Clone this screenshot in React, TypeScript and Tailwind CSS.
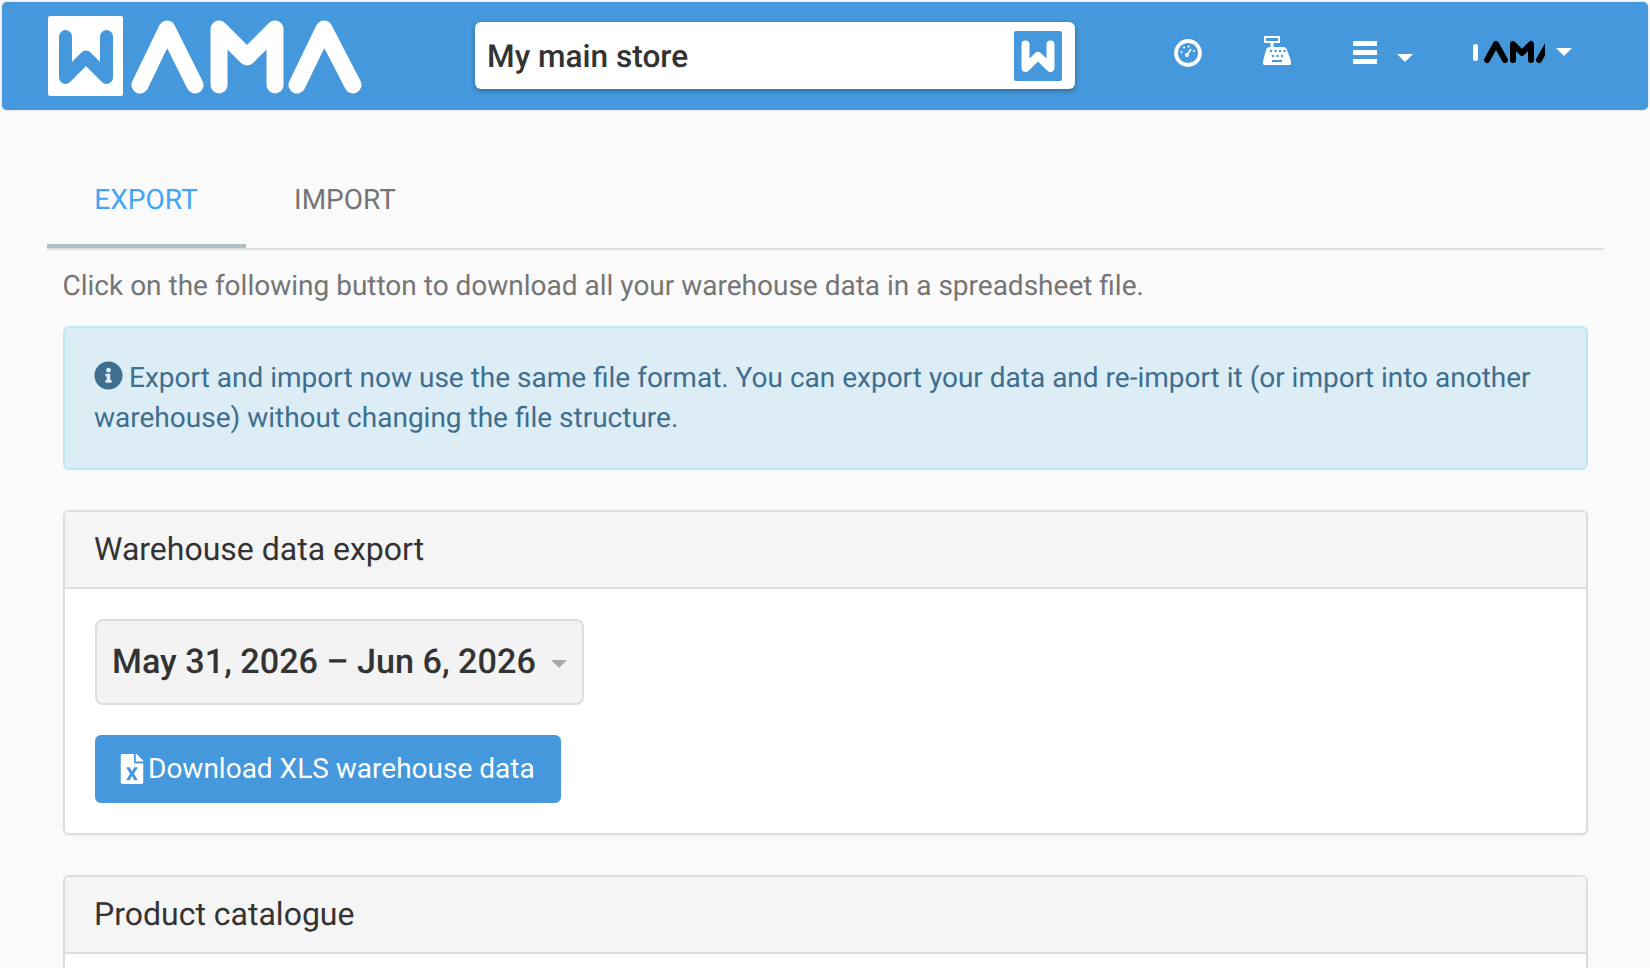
import { FaFileExcel, FaInfoCircle } from "react-icons/fa";

function Logo() {
  return (
    <svg width="316" height="80" viewBox="47 16 316 80" className="block shrink-0">
      <rect x="48" y="16" width="75" height="80" rx="2" fill="#fff" />
      <path d="M65.5 36.5V77.5L86 57L106.5 77.5V36.5" fill="none" stroke="#4498db" strokeWidth="13" strokeLinecap="round" strokeLinejoin="round" />
      <g fill="none" stroke="#fff" strokeWidth="17" strokeLinecap="round" strokeLinejoin="round">
        <path d="M140 85L167 29L195 85" />
        <path d="M219 85V29L247 57L275 29V85" />
        <path d="M297 85L324 29L353 85" />
      </g>
    </svg>
  );
}

function StoreIcon() {
  return (
    <svg width="48" height="50" viewBox="0 0 48 50" className="block shrink-0">
      <rect width="48" height="50" rx="2" fill="#4498db" />
      <path d="M11.5 13.5V37L24 25L36.5 37V13.5" fill="none" stroke="#fff" strokeWidth="8" strokeLinecap="round" strokeLinejoin="round" />
    </svg>
  );
}

function GaugeIcon() {
  return (
    <svg width="28" height="28" viewBox="0 0 28 28" className="block">
      <circle cx="14" cy="14" r="12" fill="none" stroke="#fff" strokeWidth="3.8" />
      <circle cx="13" cy="16" r="2" fill="#fff" />
      <path d="M13 16L17 10" stroke="#fff" strokeWidth="1.6" />
      <circle cx="7.5" cy="13" r="1.1" fill="#fff" />
      <circle cx="10" cy="8.5" r="1.1" fill="#fff" />
      <circle cx="14.5" cy="7.5" r="1.1" fill="#fff" />
      <circle cx="20" cy="12" r="1.1" fill="#fff" />
    </svg>
  );
}

function RegisterIcon() {
  return (
    <svg width="28" height="29" viewBox="0 0 28 29" className="block">
      <path fillRule="evenodd" fill="#fff" d="M1 0H17V7H10.5V11H20Q23 11 24 14L28 25V27.5Q28 29 26.5 29H1.5Q0 29 0 27.5V25L3 14Q4 11 7 11H7.5V7H1ZM3 2V5H15V2Z" />
      <g fill="#4498db">
        <circle cx="8" cy="15" r="1.2" />
        <circle cx="12.5" cy="15" r="1.2" />
        <circle cx="17" cy="15" r="1.2" />
        <circle cx="21.5" cy="15" r="1.2" />
        <circle cx="10" cy="20" r="1.2" />
        <circle cx="14.5" cy="20" r="1.2" />
        <circle cx="19" cy="20" r="1.2" />
        <rect x="9" y="24" width="10" height="2" />
      </g>
    </svg>
  );
}

function UserLogo() {
  return (
    <svg width="72" height="24" viewBox="0 0 72 24" className="block">
      <rect x="0" y="4" width="5" height="17" rx="2.5" fill="#fff" />
      <g fill="none" stroke="#000" strokeWidth="6" strokeLinecap="round" strokeLinejoin="round">
        <path d="M14 20L23 4L32 20" />
        <path d="M40 20V4L49 13L58 4V20" />
        <path d="M66 20L75 4" />
      </g>
    </svg>
  );
}

function Caret({ className }: { className: string }) {
  return <span className={`block h-0 w-0 border-x-[8px] border-t-[8px] border-x-transparent ${className}`} />;
}

export default function App() {
  return (
    <div className="h-[968px] overflow-hidden bg-[#fafafa] font-['Roboto',sans-serif] text-[28px] leading-[40px] text-[#757575] [text-rendering:geometricPrecision]">
      <nav className="mx-[2px] mt-[2px] flex h-[108px] items-start rounded-[5px] bg-[#4498db] shadow-[0_0_2px_rgba(0,0,0,0.25)]">
        <div className="ml-[45px] mt-[14px]">
          <Logo />
        </div>
        <div className="ml-[112px] mt-[20px] flex h-[67px] w-[600px] items-center justify-between rounded-[6px] bg-white pl-[12px] pr-[13px] shadow-[0_2px_5px_rgba(0,0,0,0.3)]">
          <span className="pt-[2px] text-[31.6px] font-medium text-[#333]">My main store</span>
          <StoreIcon />
        </div>
        <div className="ml-[99px] mt-[37px]">
          <GaugeIcon />
        </div>
        <div className="ml-[61px] mt-[34px]">
          <RegisterIcon />
        </div>
        <div className="ml-[62px] mt-[39px] flex flex-col gap-[4px]">
          <span className="block h-[5px] w-[24px] bg-white" />
          <span className="block h-[5px] w-[24px] bg-white" />
          <span className="block h-[5px] w-[24px] bg-white" />
        </div>
        <div className="ml-[20px] mt-[52px]">
          <Caret className="border-t-white" />
        </div>
        <div className="ml-[60px] mt-[38px]">
          <UserLogo />
        </div>
        <div className="ml-[11px] mt-[46px]">
          <Caret className="border-t-white" />
        </div>
      </nav>

      <div className="mx-[47px] mt-[44px] w-[1557px]">
        <div className="flex h-[96px] border-b-2 border-[#ddd]">
          <div className="flex h-[94px] w-[199px] items-center justify-center border-b-4 border-[#b0bec5] pr-[1px] pt-[2px] text-[#42a5f5]">
            EXPORT
          </div>
          <div className="flex h-[94px] w-[199px] items-center justify-center border-b-4 border-transparent pr-[1px] pt-[2px]">IMPORT</div>
        </div>

        <div className="px-4">
          <p className="-ml-[0.5px] mt-[16px]">Click on the following button to download all your warehouse data in a spreadsheet file.</p>

          <div className="mt-[20px] h-[144px] rounded-[6px] border-2 border-[#bce8f1] bg-[#dcedf6] pl-[29px] pr-[30px] pt-[30px] text-[#3f6e8e]">
            <FaInfoCircle className="mr-[6px] inline-block align-[-3px] text-[29px] leading-none text-[#3f6e8e]" />
            Export and import now use the same file format. You can export your data and re-import it (or import into another warehouse) without changing the file structure.
          </div>

          <div className="mt-[40px] h-[325px] rounded-[6px] border-2 border-[#ddd] bg-white shadow-[0_1px_2px_rgba(0,0,0,0.05)]">
            <div className="flex h-[77px] items-center rounded-t-[4px] border-b-2 border-[#ddd] bg-[#f5f5f5] pb-[2px] pl-[29px] pr-[30px] text-[32px] text-[#333]">
              Warehouse data export
            </div>
            <div className="px-[30px] pt-[30px]">
              <div className="flex h-[86px] w-[489px] items-center justify-between rounded-[8px] border-2 border-[#ddd] bg-[#f3f3f3] pl-[15px] pr-[15px] text-[34.2px] font-medium text-[#333]">
                <span>May 31, 2026 – Jun 6, 2026</span>
                <Caret className="mt-[4px] border-t-[#aaa]" />
              </div>
              <button className="mt-[30px] flex h-[68px] w-[466px] items-center justify-start gap-[1px] rounded-[6px] bg-[#4498db] pl-[22px] text-white">
                <FaFileExcel className="text-[30px]" />
                Download XLS warehouse data
              </button>
            </div>
          </div>

          <div className="mt-[40px] h-[200px] rounded-[6px] border-2 border-[#ddd] bg-white">
            <div className="flex h-[77px] items-center rounded-t-[4px] border-b-2 border-[#ddd] bg-[#f5f5f5] pb-[2px] pl-[29px] pr-[30px] text-[32px] text-[#333]">
              Product catalogue
            </div>
          </div>
        </div>
      </div>
    </div>
  );
}
